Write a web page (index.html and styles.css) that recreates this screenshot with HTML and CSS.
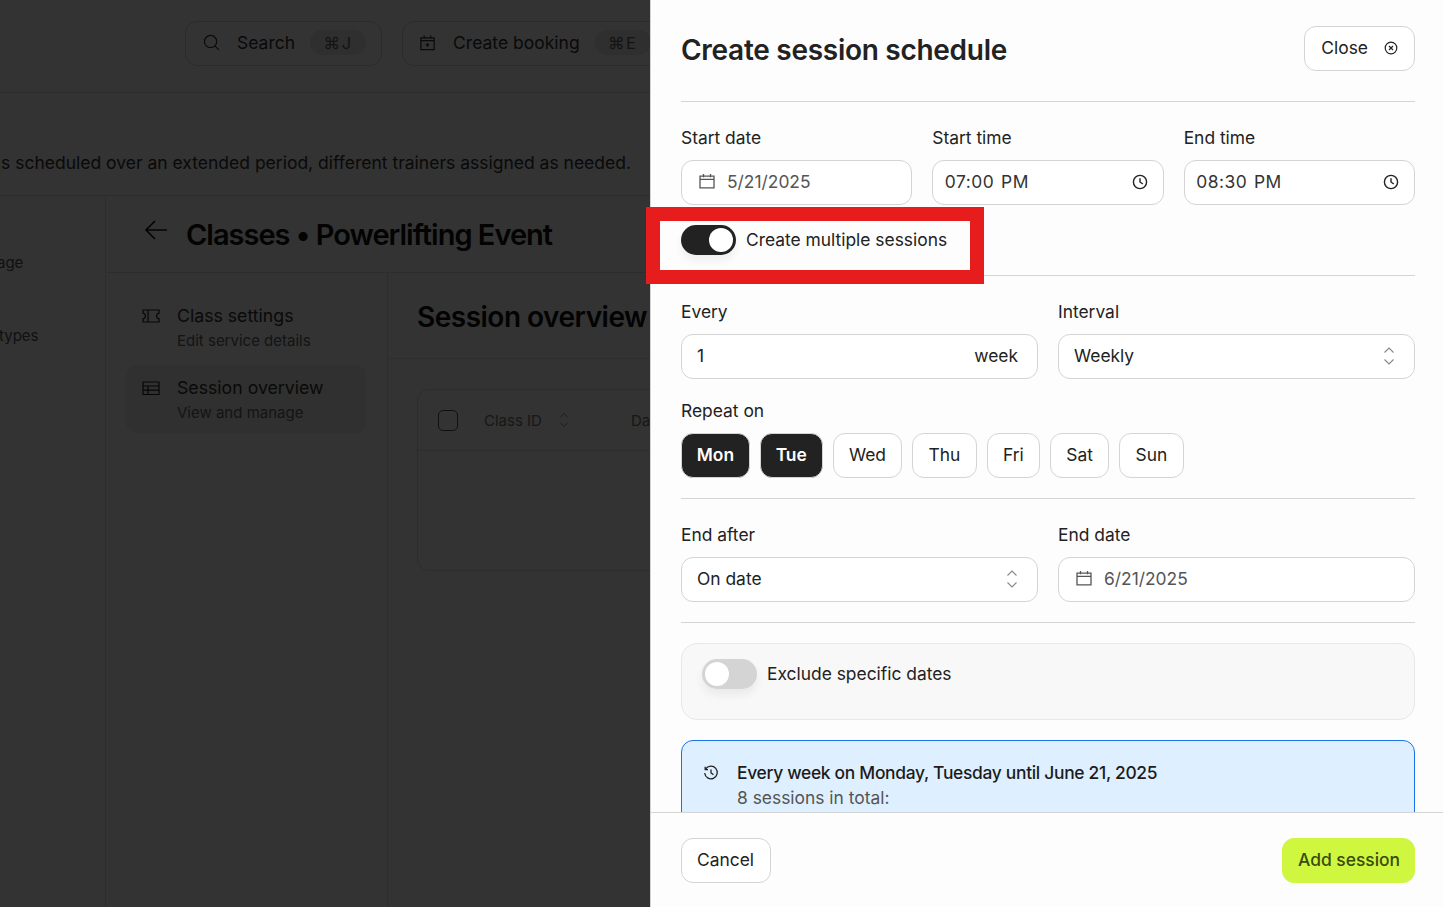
FILE: index.html
```html
<!DOCTYPE html>
<html lang="en">
<head>
<meta charset="utf-8">
<title>Create session schedule</title>
<link rel="stylesheet" href="styles.css">
</head>
<body>
<svg class="defs" aria-hidden="true">
  <symbol id="cal" viewBox="0 0 18 18"><path d="M2 4.2h14v11.6H2zM2 7.4h14M5.5 2v3.2M12.5 2v3.2" fill="none" stroke="currentColor" stroke-width="1.3"/></symbol>
  <symbol id="clock" viewBox="0 0 16 16"><circle cx="8" cy="8" r="6.6" fill="none" stroke="currentColor" stroke-width="1.4"/><path d="M8 4.2V8l2.8 2" fill="none" stroke="currentColor" stroke-width="1.4"/></symbol>
  <symbol id="updown" viewBox="0 0 12 20"><path d="M1.500 6.500L6 2l4.500 4.500M1.500 13.500L6 18l4.500-4.500" fill="none" stroke="currentColor" stroke-width="1.1"/></symbol>
</svg>

<div class="backdrop">
  <header class="topbar">
    <div class="cmd cmd-search">
      <svg class="i16" viewBox="0 0 18 18"><circle cx="8" cy="8" r="6.500" fill="none" stroke="currentColor" stroke-width="1.300"/><path d="M12.800 12.800l4 4" stroke="currentColor" stroke-width="1.300"/></svg>
      <span class="cmd-label">Search</span><kbd class="pill">⌘J</kbd>
    </div>
    <div class="cmd cmd-book">
      <svg class="i16" viewBox="0 0 18 18"><path d="M2 4h14v12.500H2zM2 7h14M5.500 1.500V5M12.500 1.500V5M9 9.500v4M7 11.500h4" fill="none" stroke="currentColor" stroke-width="1.300"/></svg>
      <span class="cmd-label">Create booking</span><kbd class="pill">⌘E</kbd>
    </div>
  </header>
  <p class="desc">s scheduled over an extended period, different trainers assigned as needed.</p>
  <div class="work">
    <aside class="rail">
      <p class="rail-a">age</p>
      <p class="rail-b">types</p>
    </aside>
    <main class="main">
      <div class="main-head">
        <svg class="back" viewBox="0 0 24 22"><path d="M23 11H2M11 2l-9 9 9 9" fill="none" stroke="currentColor" stroke-width="1.6"/></svg>
        <h2 class="main-title">Classes • Powerlifting Event</h2>
      </div>
      <div class="main-body">
        <nav class="subnav">
          <div class="nav-item">
            <svg class="nav-ico" viewBox="0 0 18 14"><path d="M1 1h16v3.2c-1.6.4-2.4 1.5-2.4 2.8s.8 2.4 2.4 2.8V13H1V9.800C2.600 9.400 3.400 8.300 3.400 7S2.600 4.600 1 4.200zM6 1v12" fill="none" stroke="currentColor" stroke-width="1.2"/></svg>
            <div><div class="nav-t">Class settings</div><div class="nav-s">Edit service details</div></div>
          </div>
          <div class="nav-item active">
            <svg class="nav-ico" viewBox="0 0 18 14"><path d="M1 1h16v12.500H1zM1 5h16M1 9.200h16M6 5v8.500" fill="none" stroke="currentColor" stroke-width="1.2"/></svg>
            <div><div class="nav-t">Session overview</div><div class="nav-s">View and manage</div></div>
          </div>
        </nav>
        <section class="content">
          <h3 class="content-title">Session overview</h3>
          <div class="content-body">
            <div class="table">
              <div class="thead">
                <span class="check"></span>
                <span class="th">Class ID</span>
                <svg class="sort" viewBox="0 0 12 20"><use href="#updown"/></svg>
                <span class="th th-date">Da</span>
              </div>
            </div>
          </div>
        </section>
      </div>
    </main>
  </div>
  <div class="scrim"></div>
</div>

<aside class="panel">
  <div class="scroll">
    <div class="panel-head">
      <h1 class="panel-title">Create session schedule</h1>
      <button class="btn btn-close">Close
        <svg class="i14" viewBox="0 0 14 14"><circle cx="7" cy="7" r="5.800" fill="none" stroke="currentColor" stroke-width="1.200"/><path d="M5 5l4 4M9 5l-4 4" stroke="currentColor" stroke-width="1.200"/></svg>
      </button>
    </div>

    <div class="grid3">
      <div class="field"><label class="label">Start date</label>
        <div class="input input-date"><svg class="ico-cal"><use href="#cal"/></svg><span>5/21/2025</span></div></div>
      <div class="field"><label class="label">Start time</label>
        <div class="input input-time"><span class="time">07:00 PM</span><svg class="ico-clock"><use href="#clock"/></svg></div></div>
      <div class="field"><label class="label">End time</label>
        <div class="input input-time"><span class="time">08:30 PM</span><svg class="ico-clock"><use href="#clock"/></svg></div></div>
    </div>

    <div class="switch-row">
      <span class="switch on"><span class="knob"></span></span>
      <span class="switch-text">Create multiple sessions</span>
    </div>

    <div class="section">
      <div class="grid2">
        <div class="field"><label class="label">Every</label>
          <div class="input input-plain"><span>1</span><span>week</span></div></div>
        <div class="field"><label class="label">Interval</label>
          <div class="input input-plain"><span>Weekly</span><svg class="ico-ud"><use href="#updown"/></svg></div></div>
      </div>
      <div class="field repeat"><label class="label">Repeat on</label>
        <div class="days">
          <button class="day sel">Mon</button><button class="day sel">Tue</button><button class="day">Wed</button><button class="day">Thu</button><button class="day">Fri</button><button class="day">Sat</button><button class="day">Sun</button>
        </div>
      </div>
    </div>

    <div class="section section-end">
      <div class="grid2">
        <div class="field"><label class="label">End after</label>
          <div class="input input-plain"><span>On date</span><svg class="ico-ud"><use href="#updown"/></svg></div></div>
        <div class="field"><label class="label">End date</label>
          <div class="input input-date"><svg class="ico-cal"><use href="#cal"/></svg><span>6/21/2025</span></div></div>
      </div>
    </div>

    <div class="exclude">
      <span class="switch"><span class="knob"></span></span>
      <span class="switch-text">Exclude specific dates</span>
    </div>

    <div class="summary">
      <svg class="ico-hist" viewBox="0 0 16 16"><path d="M2.600 4.200A6.300 6.300 0 1 1 1.700 8M2.200 1.800v2.800h2.800M8 4.500V8l2.500 1.600" fill="none" stroke="currentColor" stroke-width="1.300"/></svg>
      <div>
        <div class="sum-t">Every week on Monday, Tuesday until June 21, 2025</div>
        <div class="sum-s">8 sessions in total:</div>
      </div>
    </div>
  </div>
  <footer class="panel-foot">
    <button class="btn btn-cancel">Cancel</button>
    <button class="btn btn-add">Add session</button>
  </footer>
</aside>

<div class="callout"></div>
</body>
</html>
```

FILE: styles.css
```css
* { box-sizing: border-box; }
html, body { margin: 0; height: 100%; }
body {
  display: flex;
  height: 907px;
  overflow: hidden;
  font-family: Inter, "Liberation Sans", sans-serif;
  font-size: 17.4px;
  color: #222;
  background: #fdfdfd;
}
.defs { display: none; }
p, h1, h2, h3 { margin: 0; }
button { font: inherit; color: inherit; cursor: pointer; }

/* backdrop page */
.backdrop {
  position: relative;
  flex: 0 0 650px;
  height: 907px;
  overflow: hidden;
  background: #fdfdfd;
  display: flex;
  flex-direction: column;
}
.scrim { position: absolute; inset: 0; background: rgba(0,0,0,.8); }
.topbar {
  flex: none;
  height: 93px;
  padding: 21px 0 0 185px;
  border-bottom: 1px solid #e2e2e2;
  display: flex;
  gap: 20px;
  align-items: flex-start;
  width: 900px;
}
.cmd {
  height: 45px;
  border: 1px solid #d4d4d4;
  border-radius: 12px;
  display: flex;
  align-items: center;
  padding: 0 15px 2px 17px;
  color: #333;
  flex: none;
}
.cmd-book { padding-left: 16px; }
.i16 { width: 17px; height: 17px; flex: none; }
.cmd-label { margin-left: 17px; font-size: 17.5px; }
.pill {
  margin-left: 15px;
  width: 56px;
  height: 25px;
  border-radius: 13px;
  background: #e8e8e8;
  color: #666;
  font: 16.500px Inter, sans-serif;
  letter-spacing: 1.500px;
  display: flex;
  align-items: center;
  justify-content: center;
}
.desc {
  flex: none;
  height: 103px;
  padding: 58px 0 0 1px;
  font-size: 17.500px;
  line-height: 24px;
  color: #333;
  white-space: nowrap;
  border-bottom: 1px solid #e2e2e2;
}
.work { flex: 1; display: flex; min-height: 0; }
.rail { flex: 0 0 106px; border-right: 1px solid #e2e2e2; font-size: 15px; color: #555; }
.rail-a { margin: 57px 0 0 -3px; line-height: 20px; }
.rail-b { margin: 53px 0 0 -1px; line-height: 20px; }
.main { flex: none; width: 1000px; display: flex; flex-direction: column; }
.main-head {
  flex: none;
  height: 77px;
  border-bottom: 1px solid #e2e2e2;
  display: flex;
  align-items: center;
  padding: 0 0 0 38px;
}
.back { width: 24px; height: 22px; margin-bottom: 8px; color: #111; }
.main-title { margin-left: 18px; font-size: 29px; font-weight: 600; color: #111; letter-spacing: -1px; }
.main-body { flex: 1; display: flex; min-height: 0; }
.subnav { flex: 0 0 282px; padding: 20px 21px 0 20px; border-right: 1px solid #e2e2e2; display: flex; flex-direction: column; gap: 4px; }
.nav-item { height: 68px; border-radius: 10px; display: flex; padding: 11px 16px 0; gap: 17px; }
.nav-item.active { background: #eee; }
.nav-ico { width: 18px; height: 14px; margin-top: 5px; flex: none; color: #222; }
.nav-t { font-size: 17.700px; line-height: 24px; color: #333; white-space: nowrap; }
.nav-s { font-size: 15px; line-height: 20px; margin-top: 3px; color: #666; white-space: nowrap; }
.content { flex: 1; display: flex; flex-direction: column; }
.content-title {
  flex: none;
  height: 86px;
  padding: 25px 0 0 29px;
  font-size: 28px;
  line-height: 38px;
  font-weight: 600;
  color: #111;
  letter-spacing: -.5px;
  white-space: nowrap;
  border-bottom: 1px solid #e2e2e2;
}
.content-body { padding: 30px 0 0 29px; }
.table { height: 182px; border: 1px solid #dcdcdc; border-radius: 12px; }
.thead { height: 61px; border-bottom: 1px solid #e2e2e2; display: flex; align-items: center; padding-left: 20px; }
.check { width: 20px; height: 21px; border: 1.500px solid #555; border-radius: 5px; }
.th { margin-left: 26px; font-size: 15px; color: #777; }
.sort { width: 10px; height: 16px; margin-left: 17px; color: #777; }
.th-date { margin-left: 62px; }

/* panel */
.panel {
  flex: 1;
  min-width: 0;
  height: 907px;
  border-left: 1px solid #d4d4d4;
  background: #fdfdfd;
  display: flex;
  flex-direction: column;
}
.scroll { flex: 1; min-height: 0; overflow: hidden; padding: 0 28px 0 30px; }
.panel-head {
  height: 102px;
  padding-top: 26px;
  border-bottom: 1px solid #d4d4d4;
  display: flex;
  justify-content: space-between;
  align-items: flex-start;
}
.panel-title { font-size: 28px; line-height: 48px; font-weight: 600; letter-spacing: -.28px; color: #222; }
.btn {
  height: 45px;
  border: 1px solid #d4d4d4;
  border-radius: 12px;
  background: #fff;
  padding: 0 15px 2px;
  font-size: 17.4px;
  display: inline-flex;
  align-items: center;
  color: #222;
}
.btn-close { gap: 16px; padding-left: 16px; padding-right: 16px; }
.btn-cancel { padding-right: 16px; }
.i14 { width: 14px; height: 14px; margin-top: 1px; }
.grid3 { display: grid; grid-template-columns: repeat(3, 1fr); gap: 20px; padding-top: 24px; }
.grid2 { display: grid; grid-template-columns: repeat(2, 1fr); gap: 20px; }
.label { display: block; font-size: 17.4px; line-height: 24px; margin-bottom: 10px; color: #222; }
.input {
  height: 45px;
  border: 1px solid #d4d4d4;
  border-radius: 12px;
  background: #fff;
  display: flex;
  align-items: center;
}
.input span { margin-bottom: 2px; }
.input-date { padding: 0 16px; gap: 11px; color: #555; }
.input-time { padding: 0 15px 0 11.5px; justify-content: space-between; color: #333; }
.time { word-spacing: 1.500px; letter-spacing: .5px; }
.input-plain { padding: 0 19px 0 15px; justify-content: space-between; color: #222; }
.ico-cal { width: 18px; height: 18px; margin-bottom: 3px; color: #555; flex: none; }
.ico-clock { width: 16px; height: 16px; margin-bottom: 2px; color: #222; flex: none; }
.ico-ud { width: 12px; height: 20px; margin-bottom: 2px; color: #888; flex: none; }
.switch-row { display: flex; align-items: center; gap: 10px; margin-top: 20px; height: 30px; }
.switch-row .switch-text { padding-bottom: 2px; }
.switch {
  width: 55px;
  height: 30px;
  border-radius: 15px;
  background: #d4d4d4;
  padding: 3px;
  flex: none;
  display: flex;
  box-shadow: 0 6px 10px rgba(0,0,0,.06);
}
.switch.on { background: #222; justify-content: flex-end; }
.knob { width: 24px; height: 24px; border-radius: 50%; background: #fff; }
.switch-text { font-size: 17.4px; color: #222; }
.section { margin-top: 20px; padding-top: 24px; border-top: 1px solid #d4d4d4; }
.repeat { margin-top: 20px; }
.days { display: flex; gap: 10px; margin-bottom: 20px; }
.day {
  height: 45px;
  padding: 0 15.3px 2px;
  border: 1px solid #d4d4d4;
  border-radius: 12px;
  background: #fff;
  font-size: 17.4px;
}
.day.sel { background: #222; color: #fff; font-weight: 600; padding: 0 14.8px 2px; }
.section-end { margin-top: 0; padding-bottom: 20px; border-bottom: 1px solid #d4d4d4; }
.exclude {
  margin-top: 20px;
  padding: 15px 20px 0;
  height: 77px;
  border: 1px solid #e8e8e8;
  border-radius: 16px;
  background: #f8f8f8;
  display: flex;
  align-items: flex-start;
  gap: 10px;
}
.exclude .switch-text { line-height: 30px; }
.summary {
  margin-top: 20px;
  height: 160px;
  padding: 20px 20px 0 21px;
  border: 1px solid #1a73e8;
  border-radius: 12px;
  background: #def0ff;
  display: flex;
  gap: 18px;
}
.ico-hist { width: 16px; height: 16px; margin-top: 4px; color: #222; flex: none; }
.sum-t { font-size: 17.4px; line-height: 24px; font-weight: 500; color: #1c1c1c; letter-spacing: -.3px; }
.sum-s { font-size: 17.4px; line-height: 24px; margin-top: 1px; color: #555; }
.panel-foot {
  flex: none;
  height: 95px;
  padding: 25px 28px 0 30px;
  border-top: 1px solid #d4d4d4;
  display: flex;
  justify-content: space-between;
  align-items: flex-start;
}
.btn-add { background: #cff73f; border-color: #cff73f; color: #3b4a0c; font-weight: 500; padding-right: 14px; }

/* annotation drawn over the screenshot */
.callout {
  position: absolute;
  left: 646px;
  top: 207px;
  width: 338px;
  height: 77px;
  border: 14px solid #e71d1d;
}
```
